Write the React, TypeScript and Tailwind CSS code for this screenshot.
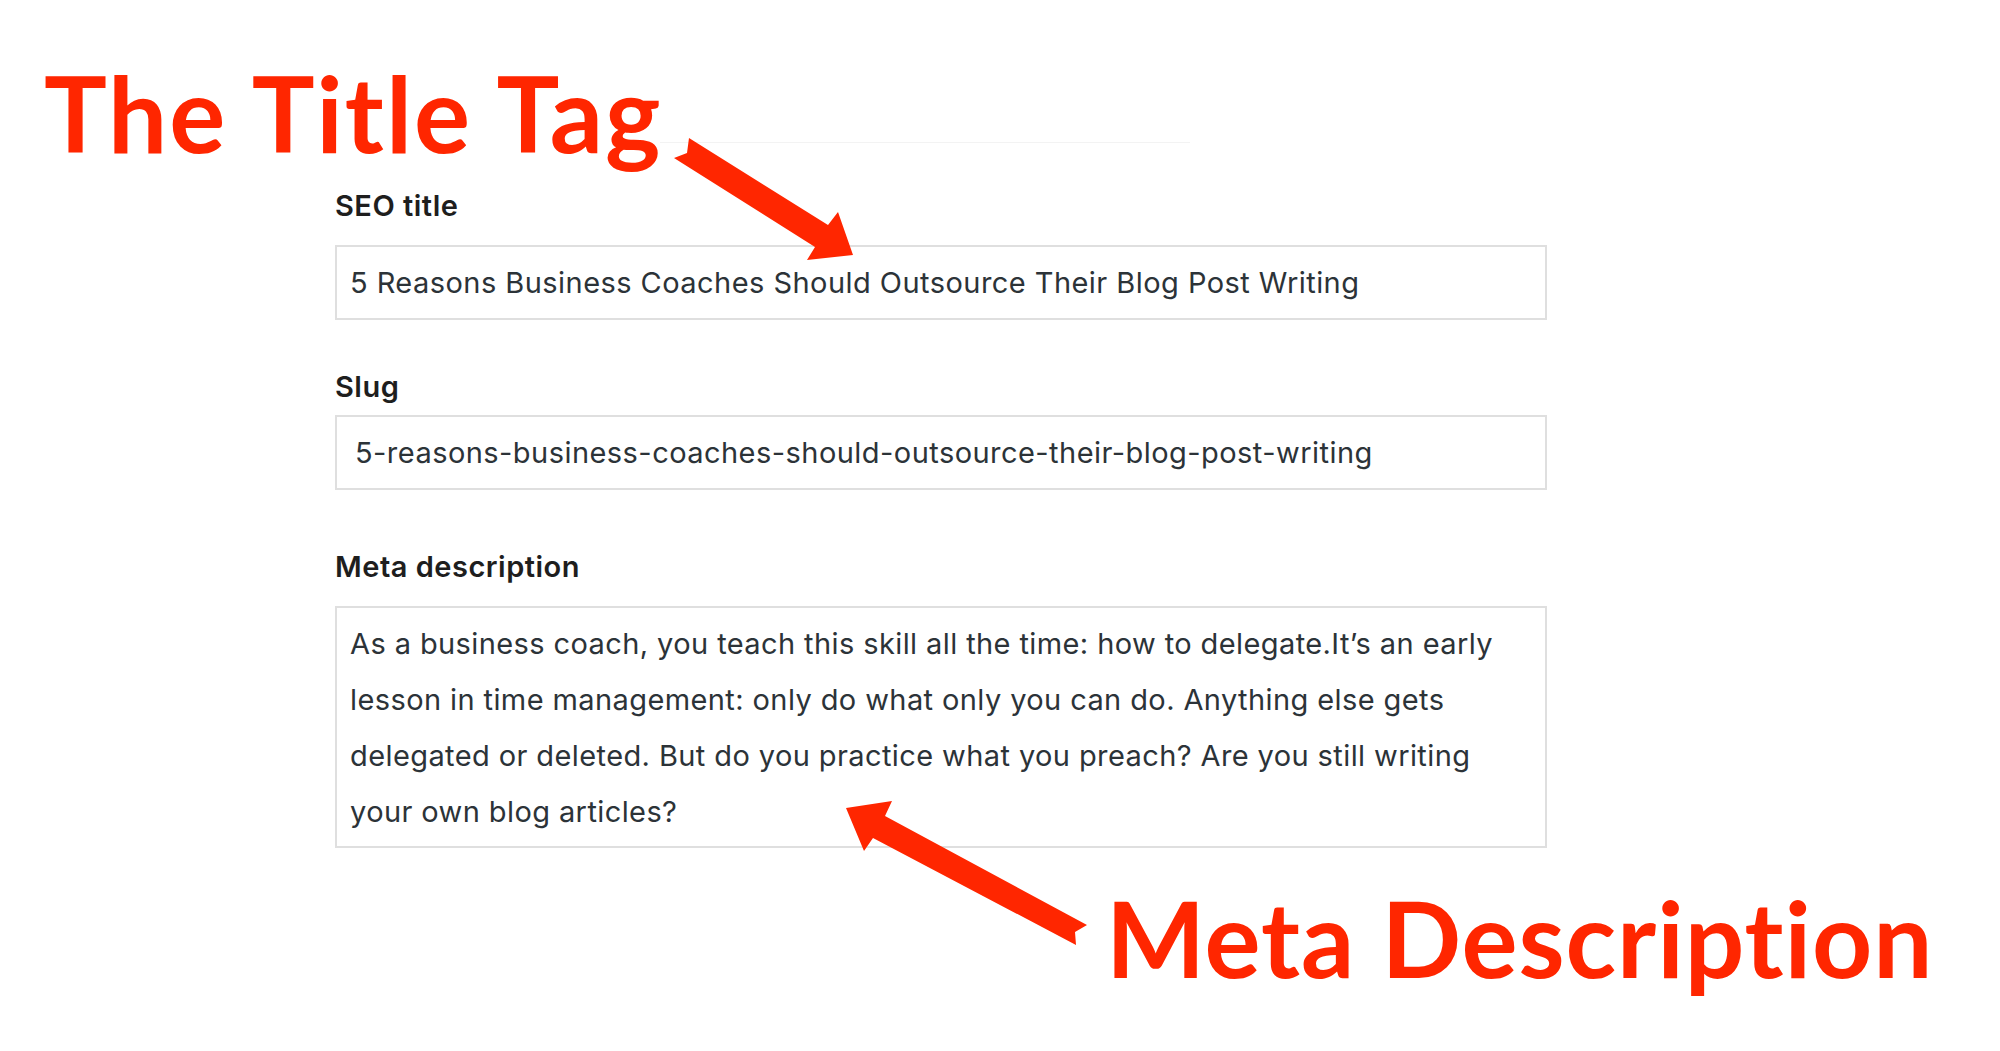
import React from 'react'

const RED = '#ff2600'

function Field({ label, value, labelGap, pad = 'px-[13px]', children }: { label: string; value?: string; labelGap: string; pad?: string; children?: React.ReactNode }) {
  return (
    <div className="flex flex-col">
      <label className="text-[29px] leading-[40px] font-semibold tracking-[0.5px] text-[#1e1e1e]">{label}</label>
      <div className={labelGap}>{children ? children : (
        <div className={`flex h-[75px] w-[1212px] items-center border-2 border-[#dfdfdf] bg-white text-[29px] leading-[40px] tracking-[0.45px] text-[#2c3338] ${pad}`}>
          {value}
        </div>
      )}</div>
    </div>
  )
}

const Arrows = () => (
  <svg className="pointer-events-none absolute left-0 top-0" width="2000" height="1051" viewBox="0 0 2000 1051">
    <polygon fill={RED} points="689,138 828,225 838,212 853,255 807,260 815,247 674,158 687,153" />
    <polygon fill={RED} points="846,808 892,801 885,816 1087,925 1075,932 1076,945 873,838 864,851" />
  </svg>
)

export default function App() {
  return (
    <div className="relative h-[1051px] w-[2000px] overflow-hidden bg-white" style={{ fontFamily: 'Inter, "Noto Sans", sans-serif' }}>
      {/* form */}
      <div className="flex flex-col pl-[335px] pt-[142px]">
        <div className="ml-[325px] h-px w-[530px] bg-[#f3f3f3]" />
        <div className="mt-[43px]">
          <Field label="SEO title" value="5 Reasons Business Coaches Should Outsource Their Blog Post Writing" labelGap="mt-[19px]" />
        </div>
        <div className="mt-[47px]">
          <Field label="Slug" value="5-reasons-business-coaches-should-outsource-their-blog-post-writing" labelGap="mt-[8px]" pad="px-[18px]" />
        </div>
        <div className="mt-[57px]">
          <Field label="Meta description" labelGap="mt-[19px]">
            <div className="h-[242px] w-[1212px] border-2 border-[#dfdfdf] bg-white px-[13px] pt-[8px] text-[29px] leading-[56px] tracking-[0.4px] text-[#2c3338]">
              <p>As a business coach, you teach this skill all the time: how to delegate.It’s an early</p>
              <p>lesson in time management: only do what only you can do. Anything else gets</p>
              <p>delegated or deleted. But do you practice what you preach? Are you still writing</p>
              <p>your own blog articles?</p>
            </div>
          </Field>
        </div>
      </div>

      {/* annotations */}
      <div className="absolute left-[44px] top-[60px] whitespace-nowrap text-[105px] font-bold leading-none tracking-[2px]" style={{ color: RED, fontFamily: 'Lato, sans-serif', fontVariantLigatures: 'none' }}>
        The Title Tag
      </div>
      <div className="absolute left-[1106px] top-[885px] whitespace-nowrap text-[105px] font-bold leading-none tracking-[0.9px]" style={{ color: RED, fontFamily: 'Lato, sans-serif', fontVariantLigatures: 'none' }}>
        Meta Description
      </div>
      <Arrows />
    </div>
  )
}
